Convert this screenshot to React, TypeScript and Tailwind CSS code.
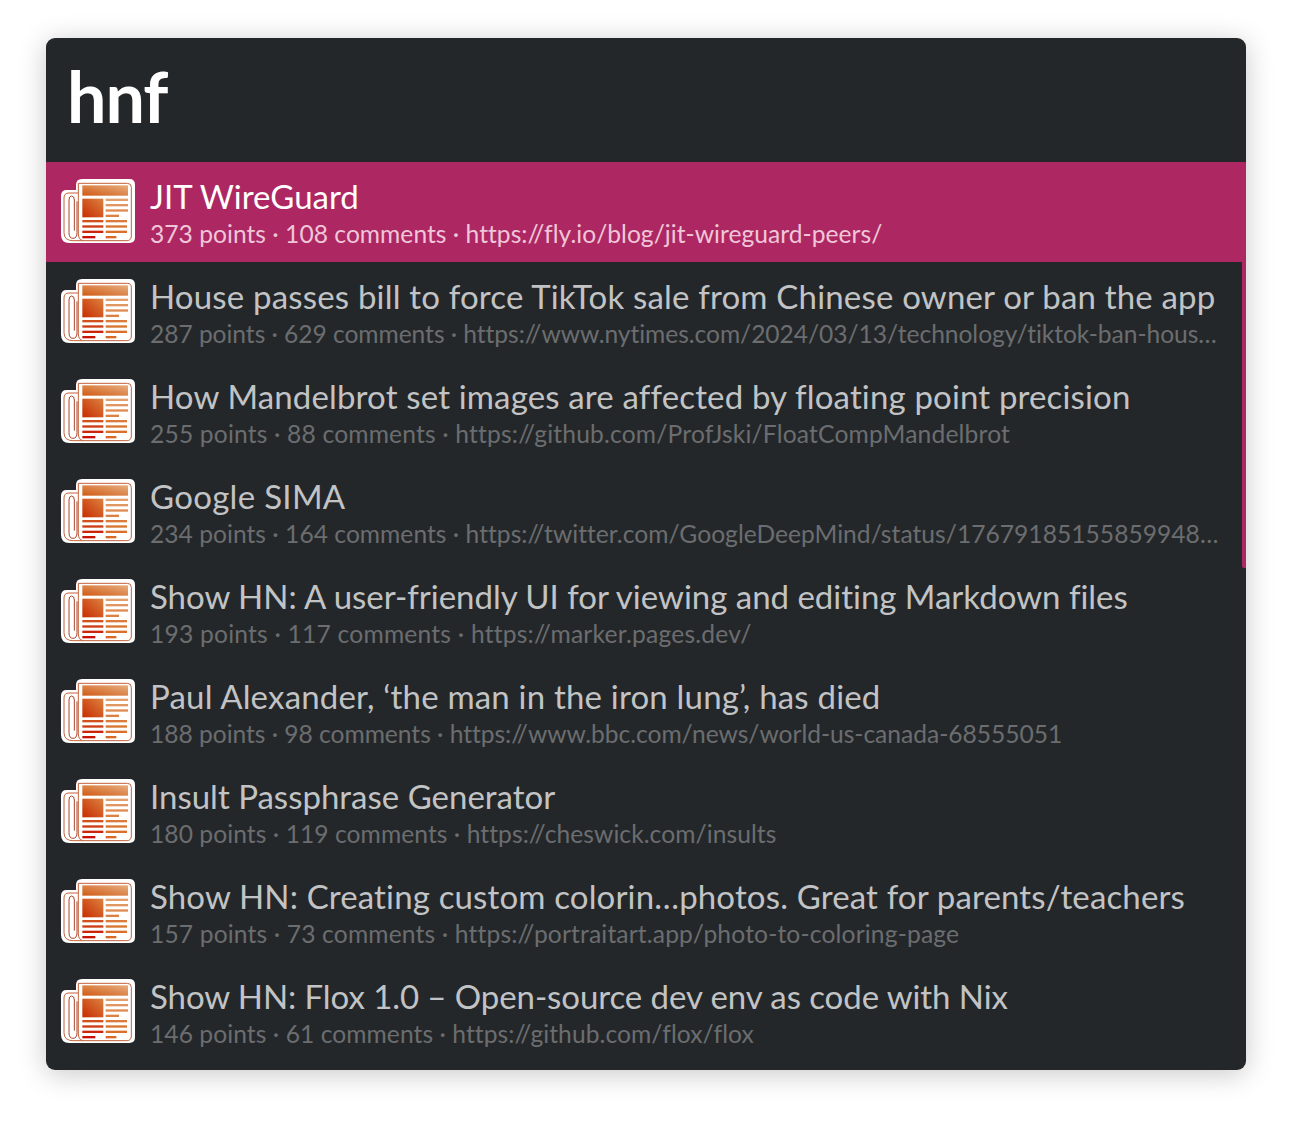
const rows = [
  {
    title: "JIT WireGuard",
    meta: "373 points · 108 comments · https://fly.io/blog/jit-wireguard-peers/",
    titleFit: "tracking-[0px]",
    metaFit: "tracking-[0.03px]",
  },
  {
    title: "House passes bill to force TikTok sale from Chinese owner or ban the app",
    meta: "287 points · 629 comments · https://www.nytimes.com/2024/03/13/technology/tiktok-ban-hous…",
    titleFit: "tracking-[0.18px]",
    metaFit: "tracking-[-0.05px]",
  },
  {
    title: "How Mandelbrot set images are affected by floating point precision",
    meta: "255 points · 88 comments · https://github.com/ProfJski/FloatCompMandelbrot",
    titleFit: "tracking-[0.15px]",
    metaFit: "tracking-[0.18px]",
  },
  {
    title: "Google SIMA",
    meta: "234 points · 164 comments · https://twitter.com/GoogleDeepMind/status/17679185155859948…",
    titleFit: "tracking-[0.3px]",
    metaFit: "tracking-[0.03px]",
  },
  {
    title: "Show HN: A user-friendly UI for viewing and editing Markdown files",
    meta: "193 points · 117 comments · https://marker.pages.dev/",
    titleFit: "tracking-[-0.02px]",
    metaFit: "tracking-[0.22px]",
  },
  {
    title: "Paul Alexander, ‘the man in the iron lung’, has died",
    meta: "188 points · 98 comments · https://www.bbc.com/news/world-us-canada-68555051",
    titleFit: "tracking-[0.19px]",
    metaFit: "tracking-[-0.03px]",
  },
  {
    title: "Insult Passphrase Generator",
    meta: "180 points · 119 comments · https://cheswick.com/insults",
    titleFit: "tracking-[0px]",
    metaFit: "tracking-[0.07px]",
  },
  {
    title: "Show HN: Creating custom colorin…photos. Great for parents/teachers",
    meta: "157 points · 73 comments · https://portraitart.app/photo-to-coloring-page",
    titleFit: "tracking-[0.15px]",
    metaFit: "tracking-[0.16px]",
  },
  {
    title: "Show HN: Flox 1.0 – Open-source dev env as code with Nix",
    meta: "146 points · 61 comments · https://github.com/flox/flox",
    titleFit: "tracking-[-0.08px]",
    metaFit: "tracking-[0.07px]",
  },
];

// x, y, width, colour of the text lines on the newspaper
const lines: [number, number, number, string][] = [
  [167, 86, 67, "#e3a06c"],
  [167, 102, 67, "#e09660"],
  [167, 118, 67, "#de8c54"],
  [167, 134, 40, "#dc8044"],
  [97, 150, 63, "#d2501e"],
  [167, 150, 64, "#da7a3c"],
  [97, 166, 63, "#cd3c14"],
  [167, 166, 64, "#d9752f"],
  [97, 182, 63, "#c9260c"],
  [167, 182, 64, "#d8702a"],
  [97, 198, 39, "#c81206"],
  [167, 198, 32, "#d86a26"],
];

function NewsIcon({ id }: { id: string }) {
  return (
    <svg viewBox="30 24 228 198" className="w-[76px] h-[66px] shrink-0 -mt-[2px]">
      <defs>
        <linearGradient id={`${id}-top`} x1="0" y1="1" x2="1" y2="0">
          <stop offset="0" stopColor="#d05a14" />
          <stop offset="1" stopColor="#e7ae80" />
        </linearGradient>
        <linearGradient id={`${id}-pic`} x1="0" y1="1" x2="1" y2="0">
          <stop offset="0" stopColor="#c62c00" />
          <stop offset="1" stopColor="#dc8240" />
        </linearGradient>
      </defs>
      <path
        d="M50 60h28v-15q0-18 18-18h142q17 0 17 17v158q0 17-17 17H58q-25 0-25-25V77q0-17 17-17z"
        fill="#fff"
      />
      <path
        d="M85 40h147q12 0 12 12v146q0 14-14 14H70q-28 0-28-24V84q0-15 15-15h28"
        fill="none"
        stroke="#c4623a"
        strokeWidth="3"
      />
      <path d="M85 40v155q0 12 12 17" fill="none" stroke="#c4623a" strokeWidth="3" />
      <path
        d="M81 94v94q0 17-12 17t-12-17V90q0-12 8-12t8 12v92"
        fill="none"
        stroke="#a8452a"
        strokeWidth="3"
      />
      <rect x="97" y="46" width="137" height="31" fill={`url(#${id}-top)`} />
      <rect x="97" y="86" width="63" height="56" fill={`url(#${id}-pic)`} />
      {lines.map(([x, y, w, color], i) => (
        <rect key={i} x={x} y={y} width={w} height="7" fill={color} />
      ))}
    </svg>
  );
}

export default function App() {
  return (
    <div className="w-[1292px] h-[1124px] bg-white pt-[38px] pl-[46px]" style={{ fontFamily: "Lato, 'Open Sans', sans-serif" }}>
      <div className="relative w-[1200px] h-[1032px] rounded-[9px] bg-[#24272a] overflow-hidden shadow-[0_4px_28px_rgba(0,0,0,0.22)]">
        <div className="h-[124px] pl-[21px] pt-[14px] text-[70px] leading-[88px] font-bold text-white tracking-[-1px]">hnf</div>
        {rows.map((row, i) => (
          <div key={i} className={`h-[100px] flex items-center pl-[14px] gap-[14px] ${i === 0 ? "bg-[#ad2763]" : ""}`}>
            <NewsIcon id={`news-${i}`} />
            <div className="whitespace-nowrap">
              <div className={`text-[33px] leading-[40px] ${row.titleFit} ${i === 0 ? "text-white" : "text-[#c2c3c4]"}`}>{row.title}</div>
              <div className={`text-[24.6px] leading-[30px] mt-[3px] ${row.metaFit} ${i === 0 ? "text-[#efc6d8]" : "text-[#6b6d6f]"}`}>{row.meta}</div>
            </div>
          </div>
        ))}
        <div className="absolute right-0 top-[224px] w-[4px] h-[306px] rounded-bl-[2px] bg-[#ad2763]" />
      </div>
    </div>
  );
}
